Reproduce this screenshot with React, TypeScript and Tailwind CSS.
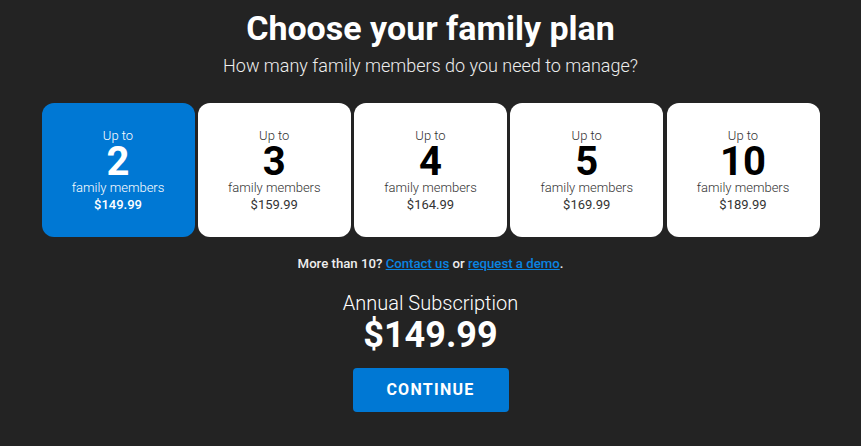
import React from "react";

const plans = [
  { n: "2", price: "$149.99" },
  { n: "3", price: "$159.99" },
  { n: "4", price: "$164.99" },
  { n: "5", price: "$169.99" },
  { n: "10", price: "$189.99" },
];

export default function App() {
  const selected = 0;
  return (
    <div
      className="w-[861px] h-[446px] bg-[#232323] text-white flex flex-col items-center overflow-hidden"
      style={{ fontFamily: "Roboto, 'Liberation Sans', sans-serif" }}
    >
      <h1 className="mt-[8px] text-[34px] leading-[40px] font-bold">Choose your family plan</h1>
      <p className="mt-[6px] text-[18px] leading-[24px] font-light text-[#eeeeee]">
        How many family members do you need to manage?
      </p>
      <div className="mt-[25px] grid grid-cols-5 gap-[3.25px] w-[778px]">
        {plans.map((p, i) => {
          const sel = i === selected;
          return (
            <div
              key={p.n}
              className={
                sel
                  ? "h-[134px] rounded-[12px] bg-[#0078d4] text-white flex flex-col items-center justify-center"
                  : "h-[134px] rounded-[12px] bg-white text-[#333333] flex flex-col items-center justify-center"
              }
            >
              <div className="text-[13px] leading-[16px] font-light">Up to</div>
              <div className={sel ? "text-[40px] leading-[36px] font-bold text-white" : "text-[40px] leading-[36px] font-bold text-black"}>
                {p.n}
              </div>
              <div className="text-[13px] leading-[16px] font-light">family members</div>
              <div className={sel ? "text-[13px] leading-[17px] font-medium" : "text-[13px] leading-[17px] font-normal"}>
                {p.price}
              </div>
            </div>
          );
        })}
      </div>
      <p className="mt-[18px] text-[13.2px] leading-[18px] font-medium text-[#eeeeee]">
        More than 10?{" "}
        <a className="text-[#0a84e0] underline" href="#">Contact us</a> or{" "}
        <a className="text-[#0a84e0] underline" href="#">request a demo</a>.
      </p>
      <div className="mt-[18px] text-[20px] leading-[24px] font-light">Annual Subscription</div>
      <div className="text-[36px] leading-[40px] font-bold">$149.99</div>
      <button className="mt-[13px] w-[156px] h-[44px] rounded-[4px] bg-[#0078d4] text-white text-[16px] font-bold tracking-[0.08em]">
        CONTINUE
      </button>
    </div>
  );
}
